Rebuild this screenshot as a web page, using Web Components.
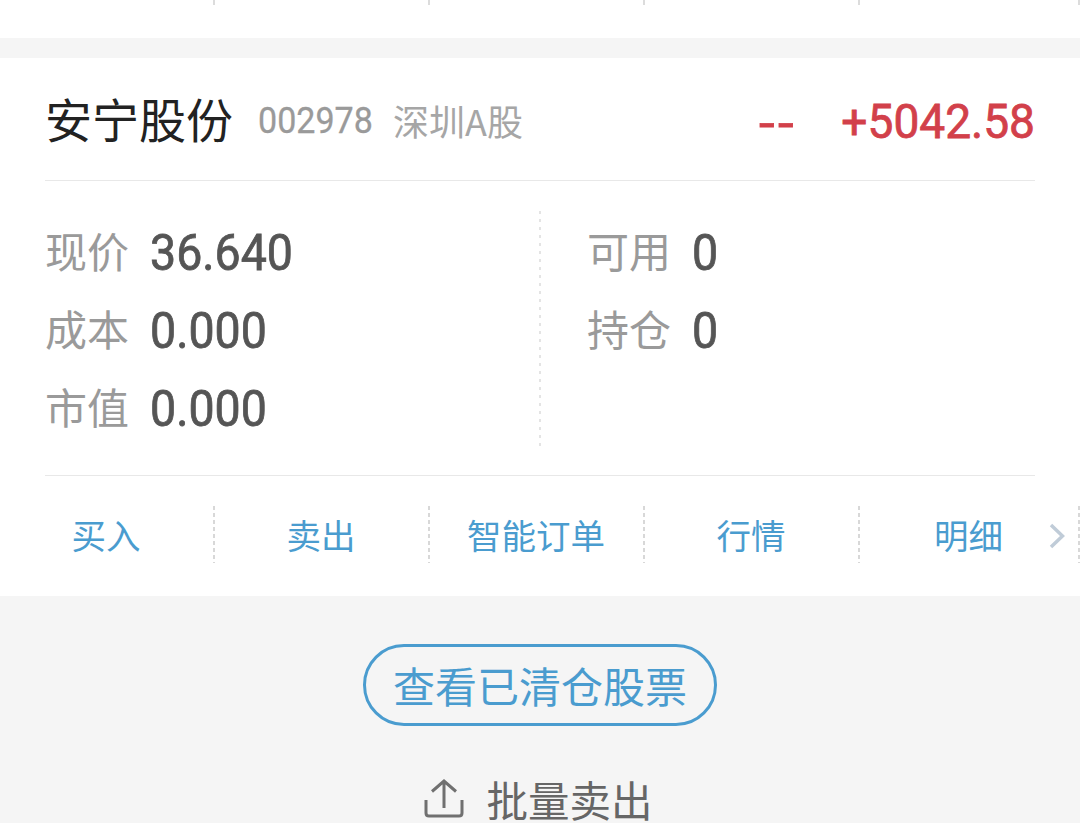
<!DOCTYPE html>
<html lang="zh">
<head>
<meta charset="utf-8">
<title>持仓</title>
<style>
  html, body { margin: 0; padding: 0; }
  body {
    width: 1080px;
    height: 823px;
    overflow: hidden;
    background: #f5f5f5;
    font-family: "Noto Sans CJK SC", sans-serif;
  }
</style>
</head>
<body>
  <top-strip></top-strip>
  <stock-card name="安宁股份" code="002978" market="深圳A股" change="--" profit="+5042.58">
    <stat-item slot="left" label="现价" value="36.640"></stat-item>
    <stat-item slot="left" label="成本" value="0.000"></stat-item>
    <stat-item slot="left" label="市值" value="0.000"></stat-item>
    <stat-item slot="right" label="可用" value="0"></stat-item>
    <stat-item slot="right" label="持仓" value="0"></stat-item>
    <action-cell slot="actions">买入</action-cell>
    <action-cell slot="actions">卖出</action-cell>
    <action-cell slot="actions">智能订单</action-cell>
    <action-cell slot="actions">行情</action-cell>
    <action-cell slot="actions" more>明细</action-cell>
  </stock-card>
  <page-footer></page-footer>

<script>
const DIGITS = '"Roboto", "Noto Sans CJK SC", sans-serif'
const CJK = '"Noto Sans CJK SC", sans-serif'

function define(name, html, setup) {
  customElements.define(name, class extends HTMLElement {
    connectedCallback() {
      const root = this.attachShadow({ mode: 'open' })
      root.innerHTML = html
      if (setup) setup(this, root)
    }
  })
}

// the dotted ticks of the card above, cut off by the top of the screen
define('top-strip', `
  <style>
    :host { display: block; height: 38px; background: #fff; }
    .row { display: grid; grid-template-columns: repeat(4, 215px) 220px; height: 5px; }
    .row i { border-right: 2px solid #dcdcdc; }
  </style>
  <div class="row"><i></i><i></i><i></i><i></i><i></i></div>
`)

define('stock-card', `
  <style>
    :host { display: block; margin-top: 20px; background: #fff; }
    .head {
      margin: 0 45px;
      height: 123px;
      box-sizing: border-box;
      border-bottom: 1px solid #e8e8e8;
      display: flex;
      align-items: center;
    }
    .name { font: 400 47px/60px ${CJK}; color: #222; width: 213px; position: relative; top: -1px; }
    .code {
      display: block;
      width: 135px;
      font: 400 37px/44px ${DIGITS};
      -webkit-text-stroke: .3px #9a9a9a;
      color: #9a9a9a;
      transform: scaleX(.92);
      transform-origin: left;
      white-space: nowrap;
      position: relative;
      top: 2px;
    }
    .market { font: 400 36px/44px ${CJK}; color: #a6a6a6; flex: 1; position: relative; top: 1px; }
    .change, .profit {
      display: block;
      font: 400 49px/60px ${DIGITS};
      -webkit-text-stroke: .8px #d2404a;
      color: #d2404a;
      transform: scaleX(.94);
      transform-origin: right;
      position: relative;
      top: 3px;
    }
    .change { margin-right: 32px; letter-spacing: 3px; transform: scaleX(1.15); top: 5px; }
    .stats {
      margin: 0 45px;
      height: 295px;
      box-sizing: border-box;
      padding-top: 30px;
      border-bottom: 1px solid #e8e8e8;
      display: grid;
      grid-template-columns: 496px 1fr;
    }
    .col { height: 235px; }
    .col.left {
      background: repeating-linear-gradient(to bottom, #e4e4e4 0 3px, transparent 3px 8px) right top / 2px 100% no-repeat;
    }
    .col.right { padding-left: 46px; }
    .actions { display: grid; grid-template-columns: repeat(4, 215px) 220px; height: 120px; padding-top: 30px; box-sizing: border-box; }
  </style>
  <div class="head">
    <span class="name"></span>
    <span class="code"></span>
    <span class="market"></span>
    <span class="change"></span>
    <span class="profit"></span>
  </div>
  <div class="stats">
    <div class="col left"><slot name="left"></slot></div>
    <div class="col right"><slot name="right"></slot></div>
  </div>
  <div class="actions"><slot name="actions"></slot></div>
`, (el, root) => {
  for (const key of ['name', 'code', 'market', 'change', 'profit']) {
    root.querySelector('.' + key).textContent = el.getAttribute(key)
  }
})

define('stat-item', `
  <style>
    :host { display: flex; align-items: center; height: 78px; }
    .label { font: 400 42px/78px ${CJK}; color: #9a9a9a; width: 105px; flex: none; }
    .value {
      display: block;
      font: 400 50px/78px ${DIGITS};
      -webkit-text-stroke: .8px #555;
      color: #555;
      transform: scaleX(.93);
      transform-origin: left;
      position: relative;
      top: 3px;
    }
  </style>
  <span class="label"></span>
  <span class="value"></span>
`, (el, root) => {
  root.querySelector('.label').textContent = el.getAttribute('label')
  root.querySelector('.value').textContent = el.getAttribute('value')
})

define('action-cell', `
  <style>
    :host {
      display: flex;
      align-items: center;
      justify-content: center;
      position: relative;
      height: 57px;
      padding-right: 3px;
      background: repeating-linear-gradient(to bottom, #d8d8d8 0 4px, transparent 4px 7px) right top / 2px 100% no-repeat;
      font: 400 34.5px/57px ${CJK};
      color: #4a9ccf;
    }
    svg { position: absolute; right: 15px; top: 17px; }
  </style>
  <slot></slot>
`, (el, root) => {
  if (el.hasAttribute('more')) {
    root.innerHTML += `<svg width="16" height="26" viewBox="0 0 16 26"><path d="M2 2 L13.5 13 L2 24" fill="none" stroke="#c0ccd8" stroke-width="3.5"/></svg>`
  }
})

define('page-footer', `
  <style>
    :host { display: flex; flex-direction: column; align-items: center; padding-top: 48px; }
    .pill {
      width: 354px;
      height: 82px;
      box-sizing: border-box;
      border: 3px solid #4a9ccf;
      border-radius: 41px;
      display: flex;
      align-items: center;
      justify-content: center;
      font: 400 42px/1 ${CJK};
      color: #4a9ccf;
    }
    .batch { display: flex; align-items: center; margin-top: 43px; padding-right: 3px; font: 400 41.5px/60px ${CJK}; color: #666; }
    .batch svg { margin-right: 22px; }
  </style>
  <div class="pill">查看已清仓股票</div>
  <div class="batch">
    <svg width="40" height="40" viewBox="0 0 40 40" fill="none" stroke="#707070" stroke-width="3">
      <path d="M20 29 V3 M8 12.5 L20 2 L32 12.5"/>
      <path d="M2 21 V34 Q2 37 5 37 H35 Q38 37 38 34 V21"/>
    </svg>
    <span>批量卖出</span>
  </div>
`)
</script>
</body>
</html>
